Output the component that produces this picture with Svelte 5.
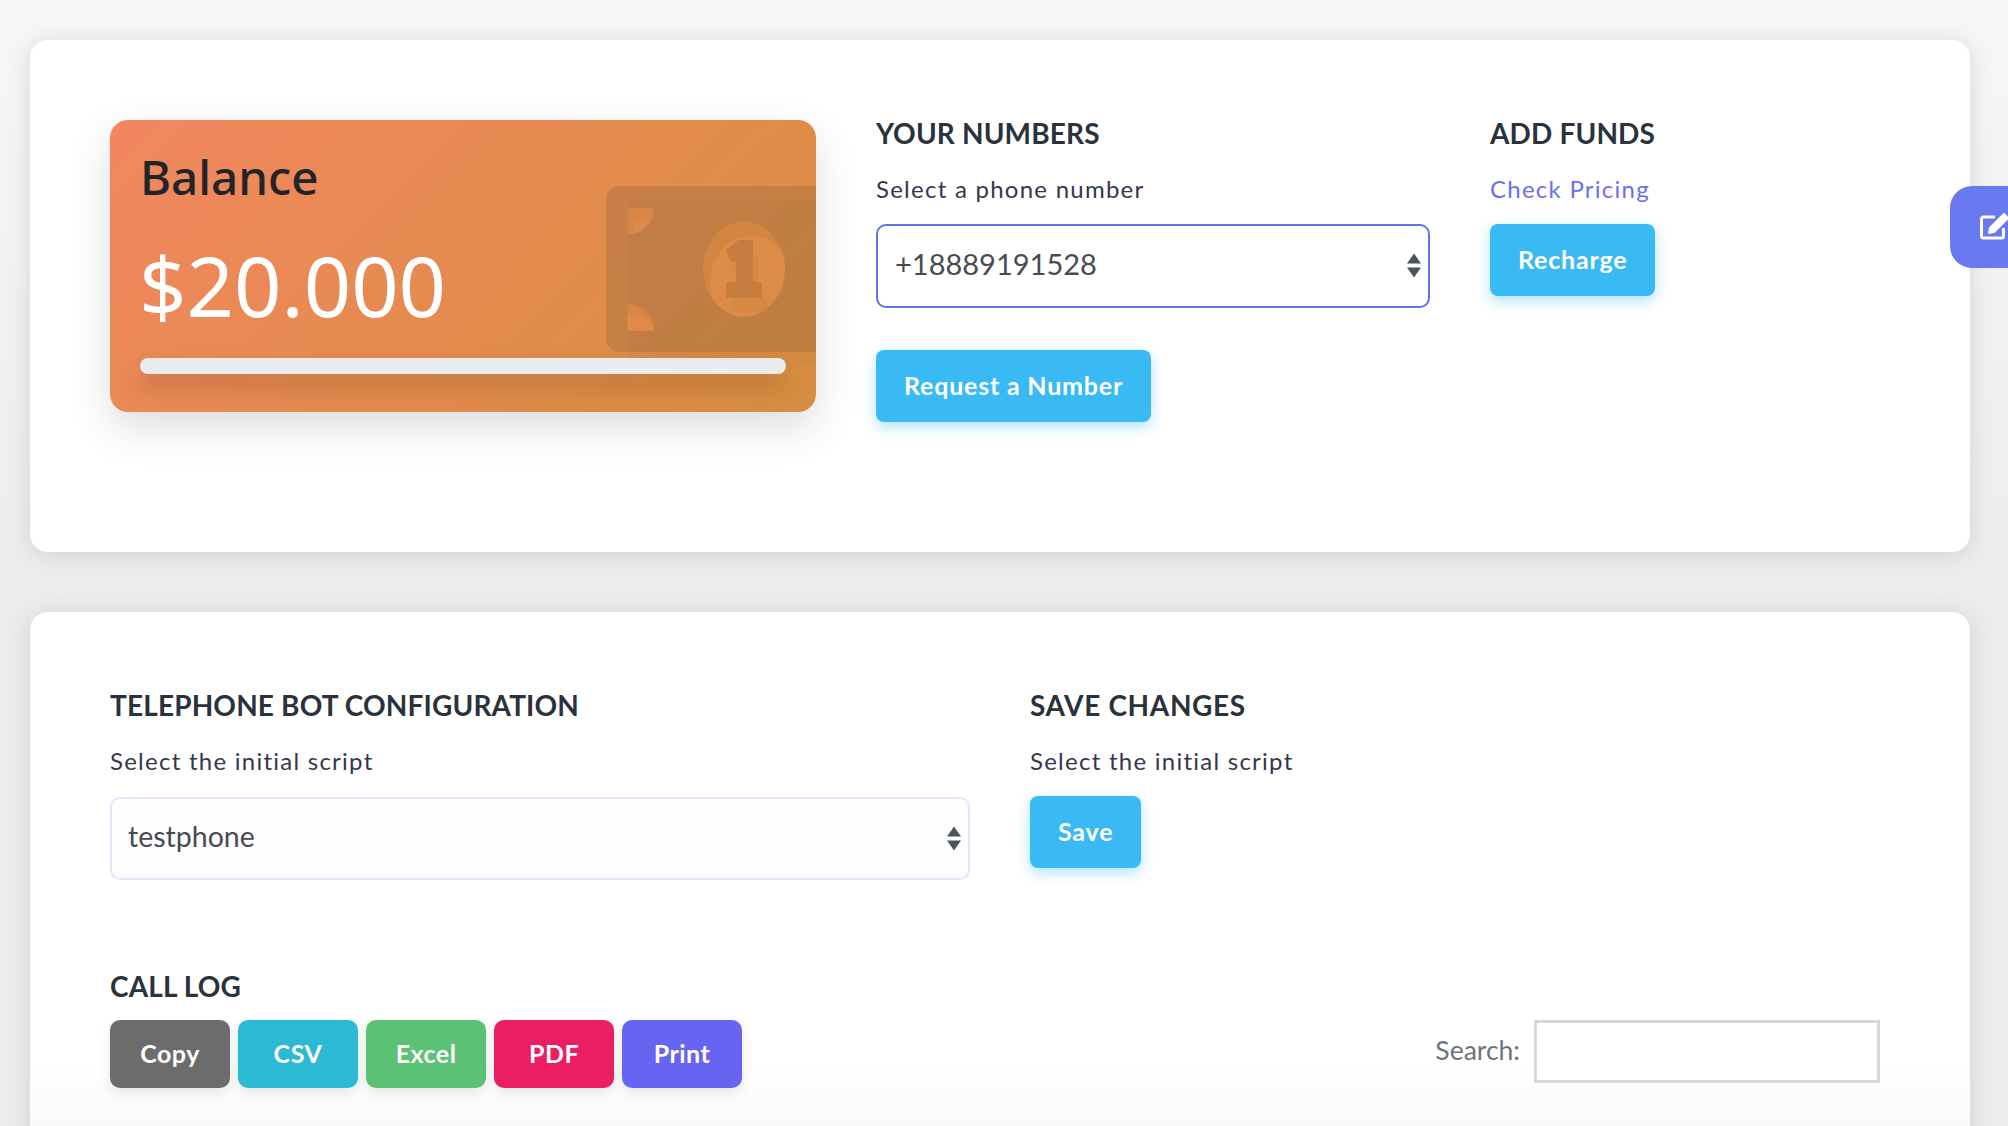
<script lang="ts">
	const logButtons = [
		{ label: "Copy", color: "#6c6c6c" },
		{ label: "CSV", color: "#2bb9d4" },
		{ label: "Excel", color: "#5bc174" },
		{ label: "PDF", color: "#ec1e63" },
		{ label: "Print", color: "#6664f1" }
	];
</script>

<div class="page">
	<section class="card top-card">
		<div class="balance">
			<div class="balance-title">Balance</div>
			<div class="balance-amount">$20.000</div>
			<div class="balance-bar"></div>
			<svg class="bill" viewBox="0 0 210 186" aria-hidden="true">
				<defs>
					<clipPath id="coin"><ellipse cx="138" cy="83" rx="41" ry="47.5" /></clipPath>
					<clipPath id="notch-top"><path d="M21.5 21.5H48A26.5 26.5 0 0 1 21.5 48Z" /></clipPath>
					<clipPath id="notch-bottom"><path d="M21.5 118A26.5 26.5 0 0 1 48 144.5H21.5Z" /></clipPath>
				</defs>
				<!-- ghost of the note, shifted down and right -->
				<path d="M21 14H210V180H21Z" fill="#7a5a3a" fill-opacity=".05" />
				<path d="M14 0H210V166H14A14 14 0 0 1 0 152V14A14 14 0 0 1 14 0Z" fill="#7a5a3a" fill-opacity=".25" />
				<path d="M21.5 21.5H48A26.5 26.5 0 0 1 21.5 48Z" fill="#d98645" />
				<rect x="28" y="35" width="30" height="20" fill="#e08a4e" clip-path="url(#notch-top)" />
				<path d="M21.5 118A26.5 26.5 0 0 1 48 144.5H21.5Z" fill="#d98645" />
				<ellipse cx="28" cy="146" rx="22" ry="17" fill="#e08a4a" clip-path="url(#notch-bottom)" />
				<ellipse cx="138" cy="83" rx="41" ry="47.5" fill="#d38642" />
				<ellipse cx="145" cy="97" rx="41" ry="47.5" fill="#dc8c46" clip-path="url(#coin)" />
				<path transform="translate(6 14)" d="M121 64L133 55H146V97H155V111H121V97H131V74L126 75Z" fill="#d68842" />
				<path d="M121 64L133 55H146V97H155V111H121V97H131V74L126 75Z" fill="#c67d40" stroke="#c67d40" stroke-width="2" stroke-linejoin="round" />
			</svg>
		</div>

		<div class="numbers">
			<h3>YOUR NUMBERS</h3>
			<p class="label">Select a phone number</p>
			<div class="select focused">
				<span>+18889191528</span>
				<svg viewBox="0 0 14 24" aria-hidden="true"><path d="M7 0L14 10H0ZM0 14H14L7 24Z" /></svg>
			</div>
			<button class="btn request">Request a Number</button>
		</div>

		<div class="funds">
			<h3>ADD FUNDS</h3>
			<a class="label link" href="#pricing">Check Pricing</a>
			<button class="btn">Recharge</button>
		</div>
	</section>

	<section class="card bottom-card">
		<div class="config">
			<div class="script-col">
				<h3>TELEPHONE BOT CONFIGURATION</h3>
				<p class="label">Select the initial script</p>
				<div class="select muted">
					<span>testphone</span>
					<svg viewBox="0 0 14 24" aria-hidden="true"><path d="M7 0L14 10H0ZM0 14H14L7 24Z" /></svg>
				</div>
			</div>
			<div>
				<h3 class="save-title">SAVE CHANGES</h3>
				<p class="label">Select the initial script</p>
				<button class="btn">Save</button>
			</div>
		</div>

		<h3 class="log-title">CALL LOG</h3>
		<div class="log-bar">
			<div class="log-buttons">
				{#each logButtons as b}
					<button class="log-btn" style="background: {b.color}">{b.label}</button>
				{/each}
			</div>
			<label class="search">
				Search:
				<input type="text" />
			</label>
		</div>
	</section>

	<div class="side-tab">
		<svg viewBox="0 0 32 32" aria-hidden="true">
			<path d="M23.5 18V26a2 2 0 0 1-2 2H3.5a2 2 0 0 1-2-2V9a2 2 0 0 1 2-2H15" fill="none" stroke="#fff" stroke-width="3" />
			<path d="M9 17.5L24 2.5l5.5 5.5-15 15-6.5 1Z" fill="#fff" />
		</svg>
	</div>
</div>

<style>
	:global(body) {
		margin: 0;
		background: #f1f2f2;
		font-family: Lato, "Noto Sans", sans-serif;
	}

	.page {
		position: relative;
		height: 1126px;
		overflow: hidden;
		padding: 40px 38px 0 30px;
		box-sizing: border-box;
		background: linear-gradient(#f6f7f7, #ececec 55%);
	}

	.card {
		background: #fff;
		border-radius: 18px;
		box-shadow: 0 3px 22px rgba(60, 70, 80, 0.17);
		box-sizing: border-box;
		padding: 80px;
	}

	.top-card {
		display: flex;
		height: 512px;
		margin-bottom: 60px;
	}

	.balance {
		position: relative;
		overflow: hidden;
		flex: none;
		width: 706px;
		height: 292px;
		box-sizing: border-box;
		padding: 27px 30px;
		border-radius: 18px;
		background: linear-gradient(135deg, #f38760, #d78e3f);
		box-shadow: 0 16px 40px rgba(40, 50, 60, 0.16);
	}

	.balance-title {
		font-family: "Noto Sans", sans-serif;
		font-weight: 500;
		font-size: 47.5px;
		line-height: 60px;
		color: #212529;
	}

	.balance-amount {
		margin-top: 28px;
		margin-left: -1px;
		font-family: "Noto Sans", sans-serif;
		font-size: 83px;
		line-height: 100px;
		color: #fff;
	}

	.balance-bar {
		position: absolute;
		left: 30px;
		right: 30px;
		top: 238px;
		z-index: 1;
		height: 16px;
		border-radius: 8px;
		background: #e9ecef;
		box-shadow: 0 14px 22px rgba(120, 70, 30, 0.32);
	}

	.bill {
		position: absolute;
		left: 496px;
		top: 66px;
		width: 210px;
		height: 186px;
	}

	.numbers {
		flex: none;
		width: 554px;
		margin-left: 60px;
	}

	.funds {
		margin-left: 60px;
	}

	h3 {
		margin: -4px 0 0;
		font-size: 28px;
		line-height: 34px;
		font-weight: 700;
		letter-spacing: 0.15px;
		color: #2a323c;
	}

	.save-title {
		letter-spacing: 0.65px;
	}

	.label {
		display: block;
		margin: 24px 0 19.5px;
		font-size: 24px;
		line-height: 30px;
		letter-spacing: 1.25px;
		color: #34374f;
	}

	.link {
		color: #6a70ee;
		text-decoration: none;
	}

	.select {
		position: relative;
		display: flex;
		align-items: center;
		height: 84px;
		box-sizing: border-box;
		padding: 0 17px 5px;
		border: 2px solid #6470ec;
		border-radius: 10px;
		font-size: 29px;
		color: #474c52;
	}

	.select svg {
		position: absolute;
		right: 7px;
		top: 26px;
		width: 14px;
		height: 27px;
		fill: #4e545a;
	}

	.select.muted {
		height: 83px;
		margin-top: 21px;
		padding-left: 16px;
		padding-bottom: 6px;
		border-color: #e3e5fb;
		background: #fdfdfe;
		font-size: 28.5px;
	}

	.btn {
		display: block;
		height: 72px;
		padding: 0 28px 2px;
		border: none;
		border-radius: 8px;
		background: #3abaf5;
		color: #fff;
		font: 700 25px Lato, "Noto Sans", sans-serif;
		letter-spacing: 0.8px;
		box-shadow: 0 5px 14px rgba(58, 186, 245, 0.4);
	}

	.request {
		margin-top: 42px;
	}

	.bottom-card {
		height: 800px;
		background: linear-gradient(#fff 56%, #f7f8f8 66%);
	}

	.config {
		display: flex;
		gap: 60px;
	}

	.script-col {
		flex: none;
		width: 860px;
	}

	.log-title {
		margin-top: 89px;
	}

	.log-bar {
		display: flex;
		justify-content: space-between;
		align-items: flex-start;
		margin-top: 17px;
		padding-right: 10px;
	}

	.log-buttons {
		display: flex;
		gap: 8px;
	}

	.log-btn {
		width: 120px;
		height: 68px;
		padding: 0 0 2px;
		border: none;
		border-radius: 10px;
		color: #fff;
		font: 700 25px Lato, "Noto Sans", sans-serif;
		letter-spacing: 0.5px;
		box-shadow: 0 5px 12px rgba(40, 50, 60, 0.1);
	}

	.search {
		display: flex;
		gap: 14px;
		font-size: 26.5px;
		line-height: 60px;
		color: #6c757d;
	}

	.search input {
		width: 346px;
		height: 63px;
		box-sizing: border-box;
		border: 3px solid #d8d8d8;
		outline: none;
	}

	.side-tab {
		position: absolute;
		left: 1950px;
		top: 186px;
		width: 80px;
		height: 82px;
		border-radius: 22px;
		background: #6979ef;
	}

	.side-tab svg {
		position: absolute;
		left: 30px;
		top: 24px;
		width: 32px;
		height: 32px;
	}
</style>
